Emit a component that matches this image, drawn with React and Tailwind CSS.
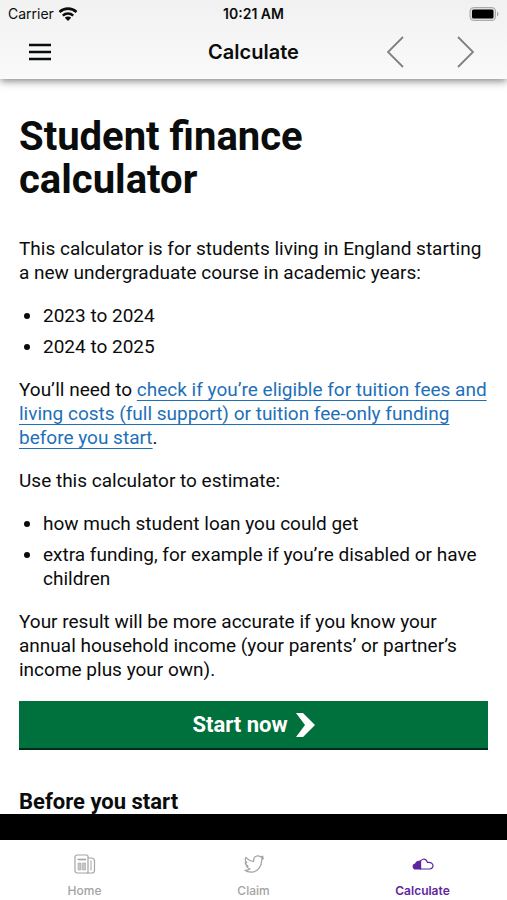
const NAV_TABS = [
  { label: "Home", icon: NewsIcon },
  { label: "Claim", icon: BirdIcon },
  { label: "Calculate", icon: CloudIcon, active: true },
];

function NewsIcon() {
  return (
    <svg viewBox="0 0 22 20" className="h-5 w-[22px]" fill="none" stroke="currentColor" strokeWidth="1.2">
      <path d="M3 1h9.5A1.500 1.500 0 0 1 14 2.500V19H3a2 2 0 0 1-2-2V3a2 2 0 0 1 2-2Z" />
      <path d="M14 4h3.500a3 3 0 0 1 3 3v9.500a2.500 2.500 0 0 1-2.500 2.500h-5" />
      <path d="M17 6.500v10" strokeWidth="1" />
      <path d="M3.500 5.500h8.500" strokeWidth="1.600" />
      <path d="M4 9h3v7H4ZM8.500 9h3v7h-3Z" fill="currentColor" fillOpacity="0.6" strokeWidth="0.600" />
    </svg>
  );
}

function BirdIcon() {
  return (
    <svg viewBox="0 0 22 20" className="h-5 w-[22px]" fill="none" stroke="currentColor" strokeWidth="1.2" strokeLinejoin="round">
      <path d="M20.500 4.200 18.700 5.700C18.900 12 15 18 8.500 18.200 6 18.300 3.500 17.600 2 16.300c2 .1 3.800-.4 5-1.500-1.900-.2-3-1.200-3.500-2.700h1.600C3.300 11.300 2.300 10 2.300 8.200l1.500.4C2.300 7.200 2 5 3 3.300c2 2.400 4.500 3.800 7.700 4C10.200 4 12.300 1.800 14.800 1.800c1.100 0 2.100.5 2.800 1.200l2.300-.9-1.200 2Z" />
    </svg>
  );
}

function CloudIcon() {
  return (
    <svg viewBox="0 0 22 12" className="h-3 w-[22px]" fill="none" stroke="currentColor" strokeWidth="1.200">
      <path d="M8.500 11V3C10 1 12.500.700 14 2c.8.700 1.200 1.500 1.500 2.500C18.500 3.700 21 5.500 21 7.700A3.300 3.300 0 0 1 17.700 11Z" />
      <path d="M8.500 11H4a2.500 2.500 0 0 1-.5-5C4 4 6 3 8.500 3Z" fill="currentColor" />
    </svg>
  );
}

function StatusBar() {
  return (
    <div className="grid grid-cols-3 items-center h-7 px-2">
      <div className="flex items-center gap-1 text-sm">
        <span>Carrier</span>
        <svg viewBox="0 0 20 14" className="h-[14px] w-5" fill="none" stroke="currentColor" strokeWidth="2.600">
          <path d="M1.500 5a12.500 12.500 0 0 1 17 0" />
          <path d="M4.800 8.600a7.600 7.600 0 0 1 10.400 0" />
          <path d="M10 14 6.800 10.800a4.500 4.500 0 0 1 6.400 0Z" fill="currentColor" stroke="none" />
        </svg>
      </div>
      <div className="text-center text-sm font-semibold">10:21 AM</div>
      <svg viewBox="0 0 30 14" className="h-[14px] w-[30px] justify-self-end">
        <rect x="1" y="0.500" width="25.500" height="13" rx="3.500" fill="#ddd" stroke="#aaa" />
        <rect x="3" y="2.500" width="21.500" height="9" rx="1.500" fill="#000" />
        <path d="M28 4.500c2 .8 2 4.200 0 5Z" fill="#aaa" />
      </svg>
    </div>
  );
}

export default function App() {
  return (
    <div className="flex h-screen flex-col bg-white font-['Inter',sans-serif] text-[#0b0c0c]">
      <header className="relative z-10 bg-gradient-to-b from-[#f1f1f1] to-[#fafafa] pb-1 shadow-[0_2px_8px_rgba(0,0,0,0.5)]">
        <StatusBar />
        <div className="grid grid-cols-3 items-center h-[47px] px-7">
          <button type="button" aria-label="Menu" className="w-fit">
            <svg viewBox="0 0 24 24" className="size-6" stroke="currentColor" strokeWidth="2.400">
              <path d="M1 5h22M1 12h22M1 19h22" />
            </svg>
          </button>
          <h2 className="text-center text-xl font-semibold">Calculate</h2>
          <div className="flex justify-end gap-[52px] pr-1 text-[#808080]">
            <button type="button" aria-label="Back">
              <svg viewBox="0 0 18 32" className="h-8 w-[18px]" fill="none" stroke="currentColor" strokeWidth="1.800">
                <path d="M16 1 1 16l15 15" />
              </svg>
            </button>
            <button type="button" aria-label="Forward">
              <svg viewBox="0 0 18 32" className="h-8 w-[18px]" fill="none" stroke="currentColor" strokeWidth="1.800">
                <path d="m1 1 15 15L1 31" />
              </svg>
            </button>
          </div>
        </div>
      </header>

      <main className="min-h-0 flex-1 overflow-hidden px-[19px] pt-9 font-['Roboto',sans-serif] text-[19px] leading-6">
        <h1 className="mb-9 text-[40px] leading-[43px] font-bold">
          Student finance
          <br />
          calculator
        </h1>

        <p className="mb-[19px]">
          This calculator is for students living in England starting
          <br />a new undergraduate course in academic years:
        </p>
        <ul className="mb-[19px] list-disc space-y-[7px] pl-6">
          <li>2023 to 2024</li>
          <li>2024 to 2025</li>
        </ul>
        <p className="mb-[19px]">
          You’ll need to{" "}
          <a href="#eligibility" className="text-[#1d70b8] underline underline-offset-4">
            check if you’re eligible for tuition fees and
            <br />
            living costs (full support) or tuition fee-only funding
            <br />
            before you start
          </a>
          .
        </p>
        <p className="mb-[19px]">Use this calculator to estimate:</p>
        <ul className="mb-[19px] list-disc space-y-[7px] pl-6">
          <li>how much student loan you could get</li>
          <li>
            extra funding, for example if you’re disabled or have
            <br />
            children
          </li>
        </ul>
        <p className="mb-[19px]">
          Your result will be more accurate if you know your
          <br />
          annual household income (your parents’ or partner’s
          <br />
          income plus your own).
        </p>

        <a
          href="#start"
          className="flex h-[47px] items-center justify-center gap-2 bg-[#00703c] text-[22px] font-bold text-white shadow-[0_2px_0_#002d18]"
        >
          Start now
          <svg viewBox="0 0 19 24" className="h-6 w-[19px]" fill="currentColor">
            <path d="M0 0h7l12 12L7 24H0l9-12Z" />
          </svg>
        </a>

        <h2 className="mt-[42px] text-[22px] font-bold">Before you start</h2>
      </main>

      <div className="h-[26px] shrink-0 bg-black" />

      <nav className="grid h-[60px] shrink-0 grid-cols-3">
        {NAV_TABS.map(({ label, icon: Icon, active }) => (
          <a
            key={label}
            href={`#${label.toLowerCase()}`}
            className={`flex flex-col items-center pt-[13px] text-xs ${
              active ? "font-semibold text-[#5f259f]" : "font-medium text-[#a3a3a3]"
            }`}
          >
            <span className="mb-2 flex h-[22px] items-center">
              <Icon />
            </span>
            {label}
          </a>
        ))}
      </nav>
    </div>
  );
}
